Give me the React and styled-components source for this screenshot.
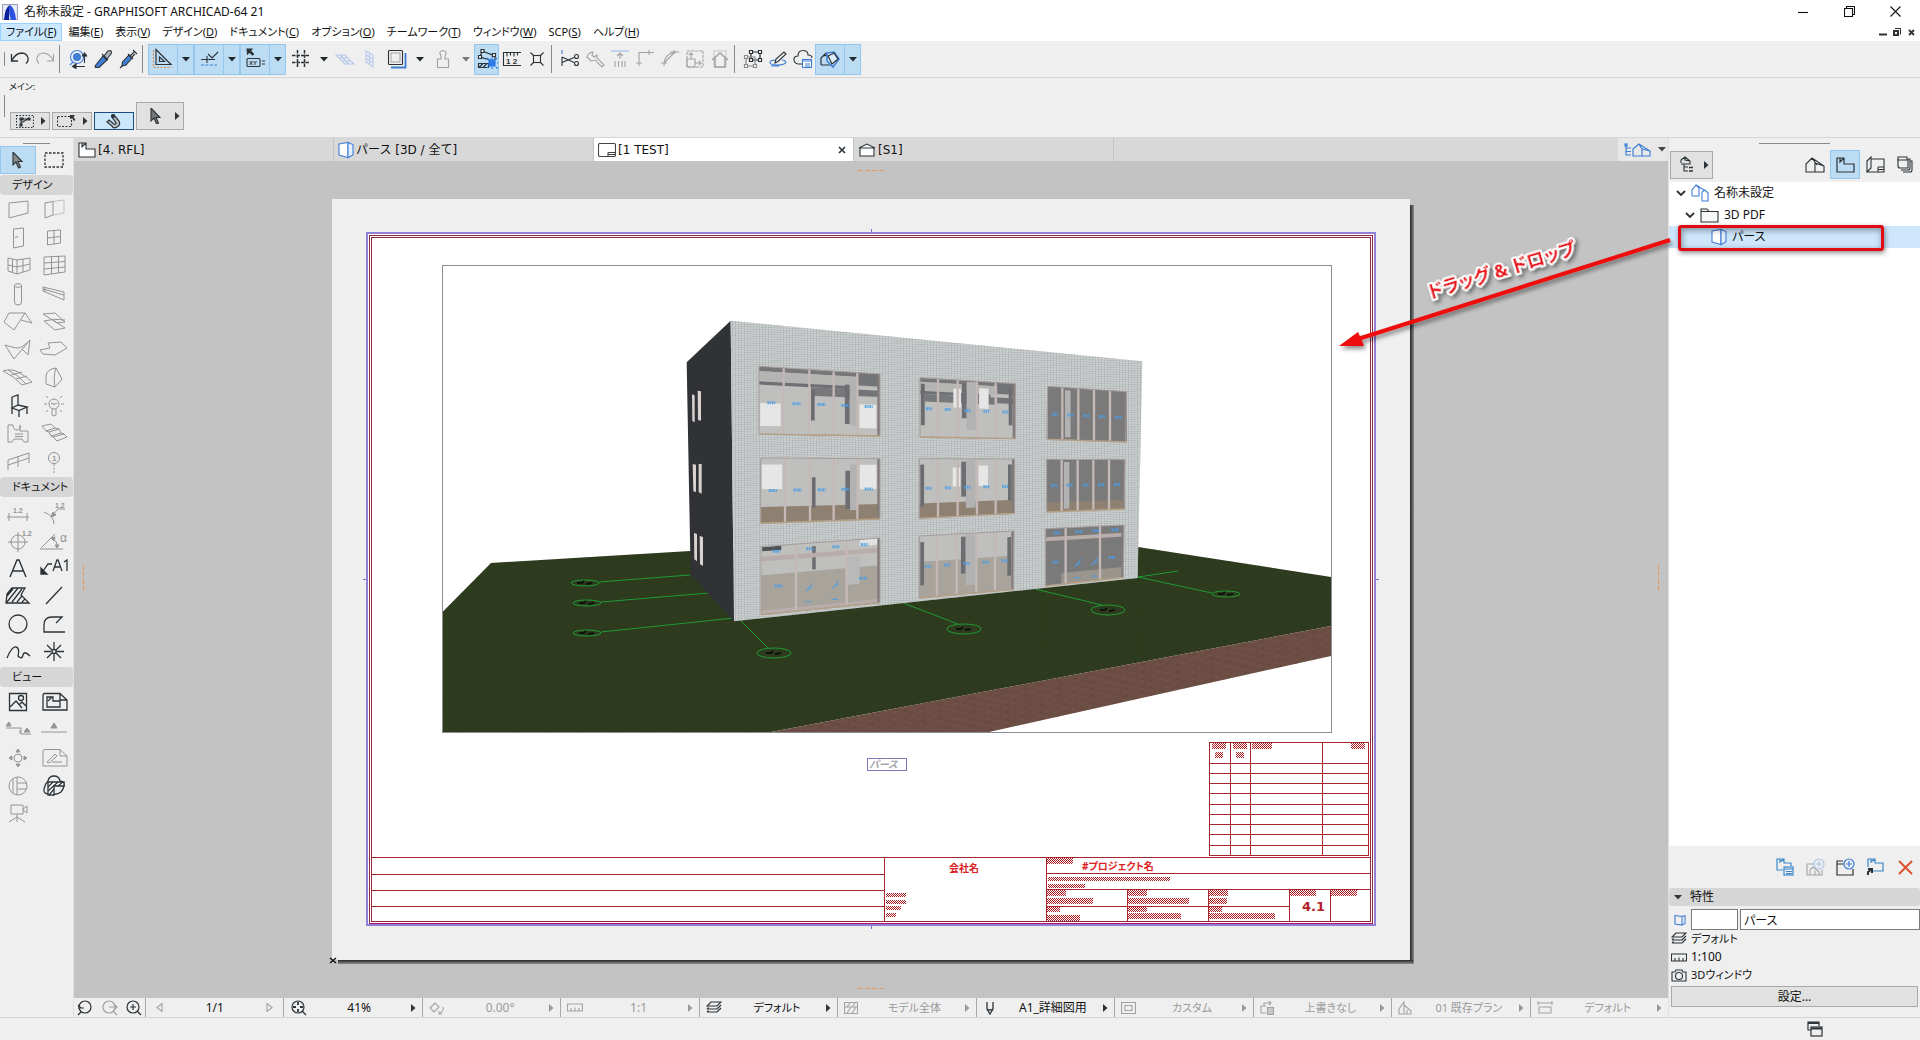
import React from "react";
import styled, { createGlobalStyle, css } from "styled-components";

const color = {
  chrome: "#efefef",
  line: "#d6d6d6",
  header: "#d6d6d6",
  canvas: "#c3c3c3",
  active: "#bcdcf4",
  activeLine: "#93c7ee",
  ink: "#2b3338",
  faint: "#a3a3a3",
  blue: "#3f7fd6",
  text: "#111",
};

const ui = '"Noto Sans", "Noto Sans CJK JP", sans-serif';
const wide = '"DejaVu Sans", "Noto Sans CJK JP", sans-serif';

const GlobalStyle = createGlobalStyle`
  *, *::before, *::after { box-sizing: border-box; }
  html, body, #root { height: 100%; margin: 0; }
  body {
    font: 12px/16px ${ui};
    font-feature-settings: "palt";
    color: ${color.text};
    background: ${color.chrome};
    overflow: hidden;
  }
  button, input { font: inherit; font-feature-settings: inherit; color: inherit; }
  button { margin: 0; padding: 0; border: 0; background: none; }
`;

const Shell = styled.div`
  min-height: 100vh;
  height: 100%;
  display: flex;
  flex-direction: column;
`;

/* ---------- title and menu ---------- */

const TitleBar = styled.header`
  flex: none;
  display: flex;
  align-items: center;
  height: 23px;
  padding: 0 2px;
  background: #fff;
`;
const Title = styled.h1`
  flex: 1;
  margin: 0 6px;
  font-size: 12px;
  font-weight: 400;
`;
const WinButton = styled.button`
  width: 46px;
  height: 20px;
  display: grid;
  place-items: center;
`;
const MenuBar = styled.nav`
  flex: none;
  display: flex;
  height: 18px;
  padding-right: 2px;
  background: #fff;
`;
const MenuItem = styled.button`
  padding: 0 5px;
  height: 18px;
  line-height: 16px;
  font-size: 11px;
  white-space: nowrap;
  border: 1px solid ${(p) => (p.$active ? "#99d1ff" : "transparent")};
  background: ${(p) => (p.$active ? "#cce8ff" : "transparent")};
`;
const DocControls = styled.div`
  margin-left: auto;
  display: flex;
`;
const DocButton = styled.button`
  width: 14px;
  display: grid;
  place-items: center;
`;

/* ---------- toolbar ---------- */

const Toolbar = styled.div`
  flex: none;
  display: flex;
  align-items: center;
  height: 37px;
  border-bottom: 1px solid ${color.line};
`;
const Grip = styled.span`
  width: 1px;
  height: ${(p) => p.$h}px;
  margin: 0 2px 0 4px;
  background: #8a8a8a;
`;
const Separator = styled.span`
  width: 8px;
  height: 28px;
  padding-left: 2px;
  &::before {
    content: "";
    display: block;
    width: 1px;
    height: 100%;
    background: #8a8a8a;
  }
`;
const ToolButton = styled.button`
  flex: none;
  display: grid;
  place-items: center;
  height: 31px;
  width: ${(p) => (p.$split ? 30 : 25)}px;
  ${(p) =>
    p.$active &&
    css`
      background: ${color.active};
      border: 1px solid ${color.activeLine};
    `}
`;
const DropButton = styled(ToolButton)`
  width: 16px;
  border-left: 0;
`;

const OptionsBar = styled.section`
  flex: none;
  height: 60px;
  border-bottom: 1px solid ${color.line};
`;
const OptionsLabel = styled.div`
  padding-left: 9px;
  height: 17px;
  font-size: 9px;
  line-height: 17px;
`;
const OptionsRow = styled.div`
  display: flex;
  gap: 2px;
  height: 35px;
  align-items: flex-end;
`;
const OptionsGrip = styled(Grip)`
  align-self: flex-start;
  margin-right: 3px;
`;
const OptionButton = styled.button`
  display: flex;
  align-items: center;
  justify-content: ${(p) => (p.$active ? "center" : "flex-end")};
  gap: ${(p) => (p.$large ? 14 : 7)}px;
  padding-right: ${(p) => (p.$active ? 0 : 3)}px;
  width: ${(p) => (p.$large ? 48 : 40)}px;
  height: ${(p) => (p.$large ? 28 : 18)}px;
  border: 1px solid ${(p) => (p.$active ? "#1c4f80" : "#a9a9a9")};
  background: ${(p) => (p.$active ? "#cce6fb" : "#e1e1e1")};
`;

/* ---------- main area ---------- */

const Workspace = styled.div`
  flex: 1;
  min-height: 0;
  display: flex;
  border-bottom: 1px solid ${color.line};
`;
const Toolbox = styled.aside`
  flex: none;
  width: 74px;
  border-right: 1px solid #e0e0e0;
`;
const Handle = styled.div`
  height: 7px;
  padding-top: 5px;
  &::before {
    content: "";
    display: block;
    height: 1px;
    width: ${(p) => p.$w}px;
    margin: 0 auto;
    background: #8a8a8a;
  }
`;
const ToolHeader = styled.h2`
  margin: 0;
  height: 20px;
  padding-left: 12px;
  line-height: 19px;
  font-size: 11px;
  font-weight: 400;
  background: ${color.header};
  border-radius: 4px;
`;
const ToolGrid = styled.div`
  display: grid;
  grid-template-columns: 36px 36px;
  grid-auto-rows: 28px;
  padding: 1px 0;
`;
const Tool = styled.button`
  display: grid;
  place-items: center;
  ${(p) =>
    p.$active &&
    css`
      background: ${color.active};
      box-shadow: inset 0 0 0 1px ${color.activeLine};
    `}
`;

const Center = styled.main`
  flex: 1;
  min-width: 0;
  display: flex;
  flex-direction: column;
`;
const Tabs = styled.div`
  flex: none;
  display: flex;
  height: 23px;
  background: #d8d8d8;
`;
const Tab = styled.div`
  flex: 0 1 260px;
  display: flex;
  align-items: center;
  padding: 0 3px 0 4px;
  border-right: 1px solid ${color.canvas};
  background: ${(p) => (p.$active ? "#fff" : "transparent")};
`;
const TabName = styled.button`
  flex: 1;
  display: flex;
  align-items: center;
  gap: 2px;
  text-align: left;
  font: 12px/16px ${wide};
`;
const TabClose = styled.button`
  width: 16px;
  height: 16px;
  display: grid;
  place-items: center;
`;
const ViewSwitch = styled.button`
  margin-left: auto;
  width: 50px;
  padding-left: 4px;
  display: flex;
  align-items: center;
  justify-content: center;
  gap: 7px;
  background: #e8e8e8;
`;
const Canvas = styled.div`
  flex: 1;
  min-height: 0;
  background: ${color.canvas};
`;
const Sheet = styled.svg`
  display: block;
  position: relative;
  z-index: 1;
  width: 100%;
  height: 100%;
  overflow: visible;
`;

/* ---------- status bar ---------- */

const StatusBar = styled.div`
  flex: none;
  display: flex;
  height: 19px;
`;
const StatusZoom = styled.div`
  flex: none;
  width: 71px;
  display: flex;
  justify-content: space-around;
  align-items: center;
`;
const StatusCell = styled.button`
  flex: 1 1 0;
  min-width: 0;
  display: flex;
  align-items: center;
  padding: 0 6px;
  border-left: 1px solid #a8a8a8;
  font-size: ${(p) => (p.$small ? 11 : 12)}px;
  color: ${(p) => (p.$off ? "#9a9a9a" : color.text)};
`;
const StatusText = styled.span`
  flex: 1;
  padding-left: ${(p) => (p.$inset ? 6 : 0)}px;
  white-space: nowrap;
`;

/* ---------- navigator ---------- */

const Navigator = styled.aside`
  flex: none;
  width: 252px;
  display: flex;
  flex-direction: column;
  border-left: 1px solid #e0e0e0;
`;
const NavTop = styled.div`
  display: flex;
  align-items: center;
  height: 37px;
  padding: 5px 0 3px 1px;
`;
const NavMenu = styled.button`
  display: flex;
  align-items: center;
  justify-content: flex-end;
  gap: 10px;
  width: 43px;
  height: 28px;
  padding-right: 3px;
  margin-right: auto;
  border: 1px solid #a9a9a9;
  background: #e1e1e1;
`;
const NavTab = styled.button`
  width: 30px;
  height: 29px;
  display: grid;
  place-items: center;
  ${(p) =>
    p.$active &&
    css`
      background: ${color.active};
      border: 1px solid ${color.activeLine};
    `}
`;
const Tree = styled.ul`
  flex: 1;
  margin: 0;
  padding: 0;
  list-style: none;
  background: #fff;
`;
const TreeRow = styled.li`
  position: relative;
  display: flex;
  align-items: center;
  gap: 5px;
  height: 22px;
  padding-left: ${(p) => p.$indent}px;
  background: ${(p) => (p.$selected ? "#cde6fb" : "transparent")};
`;
const Callout = styled.span`
  position: absolute;
  inset: -1px 36px -3px 9px;
  border: 3px solid #e30b13;
  border-radius: 3px;
  box-shadow: 1px 2px 5px rgba(0, 0, 0, 0.45), inset 1px 2px 6px rgba(0, 0, 0, 0.4);
`;
const NavActions = styled.div`
  display: flex;
  justify-content: flex-end;
  height: 42px;
`;
const NavAction = styled.button`
  width: 30px;
  display: grid;
  place-items: center;
`;
const PropHeader = styled.button`
  display: flex;
  align-items: center;
  gap: 8px;
  height: 18px;
  padding-left: 5px;
  background: ${color.header};
  border-radius: 3px;
`;
const PropFields = styled.div`
  display: flex;
  align-items: center;
  gap: 2px;
  padding: 3px 0 0 2px;
`;
const FieldIcon = styled.label`
  width: 18px;
  display: grid;
  place-items: center;
`;
const Field = styled.input`
  width: ${(p) => (p.$short ? "47px" : "auto")};
  flex: ${(p) => (p.$short ? "none" : "1")};
  min-width: 0;
  height: 21px;
  padding: 0 3px;
  border: 1px solid #7a7a7a;
  background: #fff;
`;
const PropRow = styled.div`
  display: flex;
  align-items: center;
  gap: 4px;
  height: 18px;
  padding-left: 2px;
  font-size: ${(p) => (p.$small ? 11 : 12)}px;
`;
const SettingsButton = styled.button`
  margin: 2px 2px 10px;
  height: 21px;
  border: 1px solid #a9a9a9;
  background: #e1e1e1;
`;
const Footer = styled.footer`
  flex: none;
  display: flex;
  justify-content: flex-end;
  height: 22px;
  padding: 3px 97px 0 0;
`;
const FooterButton = styled.button`
  width: 17px;
  height: 17px;
`;

/* ---------- icon helpers ---------- */

const Glyph = ({ w = 20, h = 20, c = color.ink, s = 1.1, f = "none", children }) => (
  <svg width={w} height={h} viewBox={`0 0 ${w} ${h}`} fill={f} stroke={c} strokeWidth={s} aria-hidden="true">
    {children}
  </svg>
);
const P = (props) => <path {...props} />;
const Down = ({ c = color.ink }) => (
  <Glyph w={8} h={5} f={c} c="none"><P d="M0 0h8l-4 4.5z" /></Glyph>
);
const Right = ({ c = color.ink }) => (
  <Glyph w={5} h={8} f={c} c="none"><P d="M0 0v8l4.5-4z" /></Glyph>
);
const Mini = ({ size = 6, ...rest }) => (
  <text fontFamily='"Liberation Sans", sans-serif' fontWeight="700" fontSize={size} stroke="none" {...rest} />
);
const cursor = "M1 0v13l3-3 2.5 6 2-1-2.5-5.5h4z";

const PerspectiveIcon = () => (
  <Glyph w={16} h={18} c={color.blue} f="#fff">
    <P d="M1 3L10 1.5V16.5L1 14z" /><P d="M10 1.5L15 3.5V14L10 16.5z" fill="#e3effc" />
  </Glyph>
);
const LayersIcon = () => (
  <Glyph w={16} h={14} s={1.2}>
    <P d="M5 1h10l-4 4H1z" /><P d="M1 8h10l4-4M1 11h10l4-4M1 8l1.5-1.5M1 11l1.5-1.5" />
  </Glyph>
);
const RulerIcon = ({ c }) => (
  <Glyph w={16} h={9} c={c}><P d="M.5 1h15v7H.5zM4 8V5M8 8V4.5M12 8V5" /></Glyph>
);

/* ---------- toolbar data ---------- */

const bar = {
  undo: <Glyph s={1.3}><P d="M1.5 5v7h6.5M1.5 12C4 7 8 4 12 4C18 4.5 20 11 16 14.5" /></Glyph>,
  redo: <Glyph c={color.faint}><P d="M18.500 5v7h-6.500M18.500 12C16 7 12 4 8 4C2 4.500 0 11 4 14.500" /></Glyph>,
  find: (
    <Glyph><g stroke={color.blue}><circle cx="9" cy="8" r="6.5" /><circle cx="9" cy="8" r="3.5" fill={color.blue} /><P d="M5 13l-3 3" /></g>
      <P d="M14 6h5M16.500 5v9M6 17.500h11" /><P d="M14.500 7l2-3 2 3zM8 15l-3.500 2.500 3.500 2z" fill={color.ink} /></Glyph>
  ),
  dropper: (
    <Glyph><P d="M10 7l4 4-8 7.500H2.500L2 17z" fill={color.blue} stroke={color.ink} /><P d="M9 5l6 6M11 7l4-5q2-1 3 0t0 3l-4 5" fill="#aab4bc" /></Glyph>
  ),
  syringe: (
    <Glyph><P d="M11 6l3 3-6 7-4 1 .5-4z" fill={color.blue} /><P d="M2 19l3-3M10 5l5 5M12 7l4-4M15 1l4 4M14 8l3-3" /></Glyph>
  ),
  guide: (
    <Glyph w={22} h={22} s={1.2}><P d="M4 1.500v15h15zM7.500 9v4.500h5z" /><P d="M1.500 2v17.500h18" stroke="#d98b4a" strokeDasharray="2 1.5" /></Glyph>
  ),
  snap: (
    <Glyph w={22} h={22}><P d="M3 11.500h14M9 8v7M10 6l4 4 6-6" /><P d="M3 17h16" stroke={color.blue} strokeDasharray="3 1.5" /></Glyph>
  ),
  coords: (
    <Glyph w={24} h={24}><P d="M4 2h5L7.500 4l3 3-1 1-3-3L4.500 7z" fill={color.ink} /><rect x="4" y="11.5" width="13" height="8" rx="1" />
      <Mini x="6" y="18" fill={color.ink}>XY</Mini><P d="M19 14h3M19 17h3" /></Glyph>
  ),
  grid: <Glyph s={1.5}><P d="M6.500 1v18M13.500 1v18M1 6.500h18M1 13.500h18" strokeDasharray="3.5 1" /></Glyph>,
  plane: <Glyph c="#b4c9ea"><P d="M1 6h9l9 9h-9zM4 9h9M7 12h9M5 6l9 9" /></Glyph>,
  plane2: <Glyph c="#b4c9ea"><P d="M6 2l7 4v12l-7-5zM9.500 4v11.500M6 6l7 4M6 9.500l7 4" /></Glyph>,
  trace: <Glyph><rect x="1.5" y="1.5" width="14" height="14" rx="1" /><rect x="4" y="4" width="9" height="9" stroke="#aaa" /><P d="M4 18.500h14.500V4" stroke={color.blue} strokeWidth="1.8" /></Glyph>,
  stamp: <Glyph c={color.faint}><P d="M8 7Q5 2 10 1.500Q15 2 12 7v3h3.500v8.500h-11V10H8z" /></Glyph>,
  suspend: (
    <Glyph w={22} h={22} s={1.2}><P d="M6 3l13 5v4M6 3L4 9l14 4" /><P d="M5 1.500h3v3H5zM2.500 7.500h3v3h-3zM16.500 5.500h3v3h-3z" fill="#fff" /><P d="M2.500 15.500h10v4h-10zM3 19.500l4-4M7 19.500l4-4" /><rect x="13" y="12" width="6" height="6" fill="#2b7be8" stroke="#2b7be8" /><P d="M11 10l1.500 1.500M21 10l-1.500 1.500M20 19l1.500 1.500M12 19l-1 1M21 15h1M16 9v2M16 19v2" stroke="#2b7be8" /></Glyph>
  ),
  measure: <Glyph><P d="M19 3.500H1.500v13H19M5 3.500v4M8.500 3.500v3M12 3.500v4M15.500 3.500v3" /><Mini x="4" y="15" size="8" fill={color.ink}>1 2</Mini></Glyph>,
  magic: <Glyph><rect x="6.5" y="6.500" width="7" height="7" /><P d="M3.500 3.500l3 3M16.500 3.500l-3 3M3.500 16.500l3-3M16.500 16.500l-3-3" /></Glyph>,
  cut: <Glyph><P d="M2 1v4" stroke={color.blue} /><P d="M2 8v9M2 8l12 5.500M2 13.500l12-5" /><circle cx="16.5" cy="7.500" r="2" /><circle cx="16.5" cy="14.5" r="2" /></Glyph>,
  wrench: <Glyph c={color.faint}><P d="M2 8q2-5 6-5l-1 3 2 2 3-2v3l7 7-2 2-7-7-4 1z" /></Glyph>,
  raise: <Glyph c={color.faint}><P d="M1 2h18" stroke="#9dbbe9" /><P d="M10 10V4M7 7l3-3 3 3M5 12v6M8.500 12v6M12 12v6M15 12v6" /></Glyph>,
  trim: <Glyph c={color.faint}><P d="M1 14h6M4 17V3.500h15M14 1v5" /></Glyph>,
  fillet: <Glyph c={color.faint}><P d="M1 14h6M4 17Q4 4 16 3.500M4 14L15 3M10 3h9M14 1v4" /></Glyph>,
  resize: <Glyph c={color.faint}><P d="M2 2h16v16H2z" strokeDasharray="3 1" /><P d="M2 10h8v8H2zM6 10V4M4 6l2-2 2 2M10 14h6M14 12l2 2-2 2" /></Glyph>,
  house: <Glyph c={color.faint}><P d="M4 2h12v16H4z" opacity=".5" /><P d="M2 11l8-7 8 7M5 9v9h10V9" strokeWidth="1.6" /></Glyph>,
  group: <Glyph s={1.2}><P d="M8 3h9v8H8z" /><P d="M3 8h9v9H3z" stroke="#888" /><P d="M6.500 1.500h3v3h-3zM15.500 1.500h3v3h-3zM6.500 9.500h3v3h-3zM15.500 9.500h3v3h-3z" fill="#fff" /><P d="M1.500 6.500h3v3h-3zM1.500 15.500h3v3h-3zM10.500 15.500h3v3h-3z" fill="#fff" stroke="#888" /></Glyph>,
  pen: <Glyph><P d="M8 11Q2 11 2 13.500T9 16q8 0 9-3-1-2-4-2M3 17h8" stroke={color.blue} /><P d="M7 14l1-4 8-7 2 2-8 7.500z" /></Glyph>,
  cloud: <Glyph><P d="M9 15H5Q1 14 1 10.500T5 7Q5 1.500 10 1.500T15 6q4 0 4 3" /><rect x="9.5" y="10.5" width="9" height="8" fill="#fff" stroke={color.blue} /><P d="M9 12h10M12 15h5M12 17h5" stroke={color.blue} /></Glyph>,
  cube: <Glyph w={22} h={22} s={1.2}><P d="M2 17V10L7 5M2 17h9M2 10q3-4 8-2" /><P d="M8 5l7-1 5 7-6 8-6-6z" stroke={color.blue} fill="#dcecfb" strokeWidth="1.6" /><P d="M9 8l6-3 4 6-6 5z" /></Glyph>,
};

const S = "separator";
const toolbarItems = [
  ["元に戻す", "undo"], ["やり直し", "redo"], S,
  ["検索と選択", "find"], ["パラメータを取得", "dropper"], ["パラメータを転送", "syringe"], S,
  ["ガイド線", "guide", "split", true], ["スナップガイド", "snap", "split", true], ["座標入力", "coords", "split", true],
  ["グリッド", "grid", "split"], ["編集平面", "plane"], ["平面表示", "plane2"], ["トレース", "trace", "split"],
  ["スタンプ", "stamp", "splitOff"], ["グループの一時解除", "suspend", "", true], ["測定", "measure"], ["マジックワンド", "magic"], S,
  ["分割", "cut"], ["調整", "wrench"], ["高さ調整", "raise"], ["交差", "trim"], ["フィレット", "fillet"], ["サイズ変更", "resize"], ["屋根", "house"], S,
  ["グループ", "group"], ["修正", "pen"], ["クラウド", "cloud"], ["3D表示", "cube", "split", true],
];

/* ---------- toolbox data ---------- */

const g = "#949494";
const T = ({ c = g, s = 1, children }) => <Glyph w={36} h={28} c={c} s={s}>{children}</Glyph>;

const designTools = [
  ["壁", <T><P d="M9 7L28 5V17L9 22z" /></T>],
  ["カーテン壁端", <T><P d="M17 5.500L28 4V17L17 19" opacity=".5" /><P d="M9 7L17 5.500V19L9 22z" /></T>],
  ["ドア", <T><P d="M13.500 5L23.500 4V22L13.500 24zM15 13.500l3-1" /></T>],
  ["窓", <T><P d="M11.500 7L24.500 6V19L11.500 21zM18 6.500V20M11.500 14L24.500 12.500" /></T>],
  ["コーナー窓", <T><P d="M8 6L17 8L30 6V18L17 22L8 19zM8 13L17 15L30 12M17 8V22M12.500 7V20.500M23 7V20" /></T>],
  ["カーテンウォール", <T><P d="M8 5L29 4V20L8 23zM15.500 5V22M22.500 4V21M8 11L29 9.500M8 17L29 15" /></T>],
  ["柱", <T><P d="M14.500 6V22Q14.500 25 18 25T21.500 22V6" /><ellipse cx="18" cy="5.5" rx="3.5" ry="1.800" /></T>],
  ["梁", <T><P d="M7 7L28 12V20L7 11zM7 9L28 15M9 7.500V12" /></T>],
  ["屋根", <T><P d="M9 5H25L14 22L4 14zM25 5L32 15L21 12" /></T>],
  ["シェル", <T><P d="M7 6L19 5L29 14L21 15zM8 13Q18 10 29 12M8 13L19 22L29 20L17 12" /></T>],
  ["モルフ曲面", <T><P d="M5 9L14 23L30 4L28 19L22 13M5 9Q14 12 18 12T30 4" /></T>],
  ["スラブ", <T><P d="M4 14L14 12L12 7L25 6L31 12L19 19L7 18z" /></T>],
  ["メッシュ", <T><P d="M3 7Q12 4 20 9T32 18L22 21Q14 12 3 7M8 6Q17 10 26 20M11 11L22 8M16 15L27 12" /></T>],
  ["モルフ", <T><P d="M10 12Q11 5 20 4L26 15L19 23L10 20zM20 4Q17 12 19 23" /></T>],
  ["オブジェクト", <T c={color.ink} s={1.3}><P d="M12 5L18 3V13M12 5V22M12 16L18 13L27 15L19 18.500zM19 18.500V25M27 15V22" /></T>],
  ["ランプ", <T><circle cx="18" cy="12" r="5" /><P d="M16 17v6q2 2 4 0v-6M15 12l2-1 1 2 2-2 1 1M8 12h3M25 12h3M10 4l2 2M26 4l-2 2M10 20l2-2M26 20l-2-2" /></T>],
  ["ゾーン", <T><P d="M8 5H13Q13 10 17 10T20 5V11H28V22H24L22 19H14L12 22H8zM15 14H23M15 16.500H23" /></T>],
  ["階段", <T><P d="M6 6L15 4L19 8L23 9L25 13L28 14L31 17L21 21L17 17L15 16L13 12L10 11z" /><P d="M10 11L19 8M15 16L25 13M13 12L23 9M17 17L28 14" /></T>],
  ["手摺り", <T><P d="M8 12L29 5V15M8 12V22M8 17L29 10M18 8.500V19" /></T>],
  ["通り芯", <T><circle cx="18" cy="10" r="5.5" /><Mini x="16" y="13" size="8" fill={g}>1</Mini><P d="M18 16V26" strokeDasharray="2 1.5" /></T>],
];
const documentTools = [
  ["寸法線", <T><P d="M7 19H29M9 15V23M27 15V23" /><Mini x="13" y="15" size="7" fill={g}>1.2</Mini></T>],
  ["半径寸法", <T><P d="M8 14Q18 18 18 26M16 18L22 11H29" /><P d="M15 19L20 17L17 14z" fill={g} /><Mini x="19" y="10" size="7" fill={g}>1.2</Mini></T>],
  ["レベル寸法", <T><circle cx="18" cy="16" r="7" /><P d="M8 16H28M18 6V26" /><Mini x="22" y="10" size="7" fill={g}>1.2</Mini></T>],
  ["角度寸法", <T><P d="M4 23H27M5 22L19 8M15 12Q22 14 21 22" /><P d="M15 12l4-1-1 4zM19 19l2 3 2-3z" fill={g} /><Mini x="24" y="16" size="12" fill={g} fontWeight="400">α</Mini></T>],
  ["テキスト", <T c={color.ink} s={1.4}><P d="M10 23L17 6H19L26 23M13 17H23" /></T>],
  ["ラベル", <T c={color.ink} s={1.3}><P d="M5 20L12 10H16" /><P d="M5 14V20H11z" fill={color.ink} /><P d="M17 17L21 6H22L26 17M18 13H25M28 8L31 6V17" /></T>],
  ["塗りつぶし", <T c={color.ink} s={1.3}><P d="M7 12L12 6H25L21 13L29 21H6zM7 20L18 6M12 20L22 7M17 20L22 14M7 14L13 7M22 20L25 17" /></T>],
  ["線分", <T c={color.ink} s={1.3}><P d="M10 22L26 5" /></T>],
  ["円弧/円", <T c={color.ink} s={1.3}><circle cx="18" cy="14" r="9" /></T>],
  ["ポリライン", <T c={color.ink} s={1.3}><P d="M20 13L26 7H16Q8 7 8 15V22H29" /></T>],
  ["スプライン", <T c={color.ink} s={1.3}><P d="M7 20Q12 8 16 9T18 18Q22 22 23 17T30 18" /></T>],
  ["ホットスポット", <T c={color.ink} s={1.3}><P d="M18 4V11M18 16V23M8 13.500H15M20 13.500H28M11 7L16 12M25 7L20 12M11 20L16 15M25 20L20 15" /><circle cx="18" cy="13.5" r="2" /></T>],
];
const viewTools = [
  ["図面", <T c={color.ink} s={1.3}><P d="M9.500 5.500H26.500V22.500H9.500zM10 19L16 13L22 20M19 17L22 14L26 18" /><circle cx="21" cy="10" r="2.5" /></T>],
  ["図面枠", <T c={color.ink} s={1.3}><P d="M8 5.500H24L31 12V22H7V7zM24 5.500V12H31M12 9H17V13H24V19H11V9zM12 13L16 9" /></T>],
  ["断面図", <T><P d="M6 12H21V18H31M20 18V14" /><P d="M6 10L9 6L11 10zM24 16L27 12L30 16z" fill={g} /></T>],
  ["立面図", <T><P d="M5 16H31" /><P d="M15 12L18 7L21 12z" fill={g} /></T>],
  ["展開図", <T><circle cx="18" cy="14" r="4" /><P d="M16 8L18 5L20 8zM16 20L18 23L20 20zM12 12L9 14L12 16zM24 12L27 14L24 16z" fill={g} /></T>],
  ["ワークシート", <T><P d="M8 5.500H24L31 12V22H7V7zM24 5.500V12H31M11 18L19 10L21 12L13 19zM16 18H26" /></T>],
  ["詳細図", <T><circle cx="18" cy="14" r="9" /><P d="M13 7V21M17 5V23M17 11H27M17 17H27" /></T>],
  ["変更", <T c={color.ink} s={1.3}><P d="M13 22Q7 22 8 17T12 9Q13 4 18 4T24 9Q29 10 28 14T25 20Q21 23 17 22z" /><P d="M12 10H28V14H18V23H12z" fill="#fff" /><P d="M12 15L17 10M12 19L22 10M13 23L18 17M22 14L27 10" /></T>],
  ["カメラ", <T><P d="M11 5H23V14H11zM23 9L27 6V13L23 10M17 14V18M9 22L17 17L25 22M17 17V22" /></T>],
];

/* ---------- building drawing ---------- */

const openings = [
  { q: [297, 199, 660, 222, 660, 408, 297, 402], m: [371, 448, 521, 592], tag: 0.53, kind: "ceiling" },
  { q: [780, 233, 1066, 251, 1066, 416, 780, 411], m: [834, 893, 951, 1007], tag: 0.52, kind: "ceiling" },
  { q: [1163, 259, 1400, 275, 1397, 426, 1160, 418], m: [1207, 1255, 1302, 1350], tag: 0.52, kind: "dark" },
  { q: [302, 474, 660, 476, 660, 657, 302, 670], m: [375, 450, 521, 592], tag: 0.5, kind: "floor" },
  { q: [778, 476, 1064, 477, 1064, 640, 778, 655], m: [834, 893, 951, 1007], tag: 0.5, kind: "floor" },
  { q: [1160, 478, 1395, 479, 1392, 627, 1160, 636], m: [1205, 1253, 1300, 1347], tag: 0.5, kind: "darkFloor" },
  { q: [303, 740, 660, 714, 660, 908, 303, 944], m: [408, 560], tag: 0.6, kind: "entry" },
  { q: [778, 708, 1062, 693, 1060, 868, 778, 894], m: [831, 890, 949, 1005], tag: 0.5, kind: "lobby" },
  { q: [1157, 686, 1392, 675, 1390, 832, 1157, 858], m: [1217, 1320], tag: 0.6, kind: "darkEntry" },
];

function Opening({ q, m, tag, kind }) {
  const [x0, t0, x1, t1, , b1, , b0] = q;
  const at = (x, k) => {
    const u = (x - x0) / (x1 - x0);
    const top = t0 + (t1 - t0) * u;
    const bottom = b0 + (b1 - b0) * u;
    return top + (bottom - top) * k;
  };
  const band = (xa, xb, ka, kb, fill) => (
    <polygon fill={fill} points={`${xa},${at(xa, ka)} ${xb},${at(xb, ka)} ${xb},${at(xb, kb)} ${xa},${at(xa, kb)}`} />
  );
  const w = x1 - x0;
  const dark = kind.startsWith("dark");
  const entry = kind === "entry" || kind === "darkEntry";
  const narrow = w < 300;
  const edges = [x0, ...m, x1];
  return (
    <g>
      {band(x0, x1, 0, 1, dark ? "#7b7a7a" : "#bfbfbd")}
      {kind === "ceiling" && (
        <>
          {band(x0, x1, 0, 0.07, "#77777a")}
          {band(x0, x1, 0.07, 0.22, "#b4b4b2")}
          {band(x0, x0 + w * 0.74, 0.22, 0.27, "#6f7073")}
          {band(x0 + w * (narrow ? 0.05 : 0.43), x0 + w * 0.8, 0.27, 0.4, "#77787a")}
          {band(x0 + w * 0.81, x1, 0.02, 0.2, "#737478")}
          {band(x0 + w * 0.81, x1, 0.27, 0.37, "#737478")}
        </>
      )}
      {(kind === "floor" || kind === "darkFloor") && band(x0, x1, kind === "floor" ? 0.75 : 0.82, 1, "#8f8171")}
      {(kind === "entry" || kind === "lobby") && band(x0, x1, 0.42, 1, "#a9a49b")}
      {kind === "darkEntry" && band(x0 + w * 0.2, x1, 0.8, 1, "#99948c")}
      {!dark && !narrow && kind !== "entry" && (
        <>
          {band(x0 + w * 0.43, x0 + w * 0.46, 0.3, 0.78, "#6b6c70")}
          {band(x0 + w * 0.71, x0 + w * 0.75, 0.2, 0.82, "#6d6e72")}
          {band(x0 + w * 0.75, x0 + w * 0.81, 0.1, 0.84, "#b2b2b2")}
        </>
      )}
      {!dark && narrow && (
        <>
          {band(x0 + w * 0.01, x0 + w * 0.05, 0.1, 0.8, "#6b6c70")}
          {kind !== "lobby" && band(x0 + w * 0.35, x0 + w * 0.43, 0.15, 0.48, "#e6e6e6")}
          {kind !== "lobby" && band(x0 + w * 0.62, x0 + w * 0.72, 0.12, 0.48, "#e6e6e6")}
          {band(x0 + w * 0.44, x0 + w * 0.49, 0.05, 0.66, "#6d6e72")}
          {band(x0 + w * 0.49, x0 + w * 0.59, 0.02, 0.86, "#b2b2b2")}
          {band(x0 + w * 0.93, x0 + w * 0.97, 0.1, 0.76, "#6d6e72")}
        </>
      )}
      {!narrow && (kind === "ceiling" || kind === "floor") && (
        <>
          {band(x0 + w * 0.01, x0 + w * 0.18, kind === "floor" ? 0.1 : 0.54, kind === "floor" ? 0.48 : 0.88, "#e6e6e6")}
          {band(x0 + w * 0.83, x0 + w * 0.97, kind === "floor" ? 0.1 : 0.5, kind === "floor" ? 0.5 : 0.88, "#e6e6e6")}
        </>
      )}
      {dark && kind !== "darkEntry" && band(x0 + w * 0.22, x0 + w * 0.29, 0.05, 0.95, "#b2b2b2")}
      {kind === "entry" && (
        <>
          {band(x0 + w * 0.71, x0 + w * 0.83, 0.25, 0.68, "#b9b9b9")}
          {band(x0 + w * 0.01, x0 + w * 0.17, 0.01, 0.07, "#4e5558")}
          {band(x0 + w * 0.83, x0 + w * 0.98, 0, 0.1, "#e2e2e2")}
          {band(x0 + w * 0.43, x0 + w * 0.46, 0.05, 0.4, "#6d6e72")}
        </>
      )}
      {entry && band(x0, x1, 0.15, 0.22, "#b9adab")}
      {kind === "entry" && band(x0, x1, 0.94, 1, "#b9adab")}
      {band(x1 - 8, x1, 0, 1, "#827b7b")}
      {m.map((x) => <line key={x} x1={x} x2={x} y1={at(x, 0)} y2={at(x, 1)} stroke="#c4b9b7" strokeWidth="7" />)}
      <polygon points={q.join(" ")} fill="none" stroke="#a59d9b" strokeWidth="3" />
      <line x1={x0} x2={x1} y1={b0} y2={b1} stroke="#b5a085" strokeWidth="4" />
      {edges.slice(0, -1).map((x, i) => {
        const cx = (x + edges[i + 1]) / 2;
        const half = narrow ? 9 : 12;
        if (entry && i === 1) return null;
        return (
          <line key={x} x1={cx - half} x2={cx + half} y1={at(cx, tag)} y2={at(cx, tag)} stroke="#4a9ee6" strokeWidth="9" strokeDasharray="6 2 4 2 5 2" opacity=".85" />
        );
      })}
      {entry &&
        [0.1, 0.38, 0.6, 0.84].map((u) => (
          <line key={u} x1={x0 + w * u} x2={x0 + w * u + 22} y1={at(x0 + w * u, 0.08)} y2={at(x0 + w * u, 0.08)} stroke="#4a9ee6" strokeWidth="9" strokeDasharray="6 2 4 2 5 2" opacity=".85" />
        ))}
      {entry &&
        [0.4, 0.62].map((u) => (
          <path key={u} d={`M${x0 + w * u - 8} ${at(x0 + w * u, 0.72)}l20-24m-16 20l16-10m-22 46h20`} stroke="#4a9ee6" strokeWidth="3" fill="none" />
        ))}
    </g>
  );
}

const axes = [
  { c: [585, 583], to: [690, 575] },
  { c: [587, 603], to: [709, 593] },
  { c: [587, 633], to: [734, 618] },
  { c: [774, 653], to: [741, 621], big: true },
  { c: [964, 629], to: [903, 603], big: true },
  { c: [1108, 610], to: [1035, 589], big: true },
  { c: [1226, 594], to: [1138, 577] },
];

function Building() {
  return (
    <g>
      <path d="M442.500 612L491 563L690 551L1138 547L1331 577V626L771 732H442.500z" fill="#2d3a1d" />
      <path d="M442.500 612L491 563L690 551L1138 547L1331 577V626L771 732H442.500z" fill="url(#grass)" />
      <path d="M771 732L1331 626V656L989 732z" fill="#6b4d43" />
      <path d="M771 732L1331 626V656L989 732z" fill="url(#soil)" />
      <g stroke="#1f9a35" fill="none">
        {axes.map(({ c, to, big }) => (
          <g key={c[0] + "-" + c[1]}>
            <line x1={to[0]} y1={to[1]} x2={c[0] + (big ? -6 : to[0] > c[0] ? 14 : -14)} y2={c[1] - (big ? 5 : 1)} />
            <ellipse cx={c[0]} cy={c[1]} rx={big ? 17 : 14} ry={big ? 5 : 3} />
            <path d={`M${c[0] - 8} ${c[1]}h5l2-2m2 3l6-1`} stroke="#0b130a" strokeWidth="2" />
          </g>
        ))}
        <path d="M1138 577L1178 571" />
      </g>
      <g transform="translate(660 300) scale(.33333)">
        <polygon points="80,187 212,62 222,964 92,825" fill="#303236" />
        <g fill="#d9d2cf">
          <path d="M96 283l8 3v81l-7-4zM113 272l10 2v88l-9-2zM98 492l10 2v82l-8-2zM116 491l9 2v88l-9-4zM102 699l9 3v82l-8-6zM119 708l10 3v86l-9-4z" />
        </g>
        <polygon points="212,62 1447,184 1433,834 222,964" fill="#cbcfcf" />
        <polygon points="212,62 1447,184 1433,834 222,964" fill="url(#brick)" />
        {openings.map((o) => <Opening key={o.q[0] + "-" + o.q[1]} {...o} />)}
      </g>
    </g>
  );
}

/* ---------- title block drawing ---------- */

const hatches = [
  [1212, 743, 14, 6], [1233, 743, 14, 6], [1252, 743, 20, 6], [1351, 743, 14, 6], [1215, 752, 8, 6], [1236, 752, 8, 6],
  [1047, 858, 26, 6], [1048, 877, 122, 4], [1048, 884, 37, 4],
  [1047, 890, 19, 6], [1047, 898, 46, 6], [1047, 907, 13, 5], [1047, 915, 33, 6],
  [1128, 890, 19, 6], [1128, 898, 61, 6], [1128, 907, 19, 5], [1128, 913, 53, 6],
  [1209, 890, 19, 6], [1209, 898, 18, 6], [1209, 907, 13, 5], [1209, 913, 66, 6],
  [1290, 890, 26, 6], [1331, 890, 26, 6],
  [886, 893, 20, 4], [886, 900, 20, 4], [886, 906, 15, 4], [886, 913, 10, 4],
];
const tableRows = [763, 773, 783, 793, 804, 814, 824, 834, 845];

function TitleBlock() {
  return (
    <g>
      <g stroke="#a3262c" fill="none" shapeRendering="crispEdges">
        <rect x="1209.5" y="742.5" width="159" height="113" />
        <path d="M1230.500 742V855M1250.500 742V855M1322.500 742V855" />
        {tableRows.map((y) => <path key={y} d={`M1209 ${y}.5H1368`} />)}
        <path d="M371 857.500H1371M371 874.500H884M371 890.500H884M371 906.500H884M884.500 857V922M1046.500 857V922" />
        <path d="M1047 873.500H1371M1047 889.500H1371M1047 906.500H1289M1127.500 889V922M1208.500 889V922M1289.500 889V922M1330.500 889V922" />
      </g>
      {hatches.map(([x, y, w, h]) => <rect key={x + "-" + y} x={x} y={y} width={w} height={h} fill="url(#hatch)" />)}
      <g fill="#dc1f26" fontFamily={ui} fontWeight="700">
        <text x="949" y="872" fontSize="10">会社名</text>
        <text x="1082" y="870" fontSize="10">#プロジェクト名</text>
        <text x="1302" y="911" fontSize="13" fontFamily='"DejaVu Sans", sans-serif' fill="#b3202a">4.1</text>
      </g>
    </g>
  );
}

function LayoutSheet() {
  return (
    <Sheet viewBox="74 161 1594 837" role="img" aria-label="レイアウト 1 TEST">
      <defs>
        <pattern id="brick" width="9" height="7" patternUnits="userSpaceOnUse" patternTransform="skewY(2)">
          <path d="M0 0V7M0 0H9" stroke="#a3a9ab" strokeWidth="2.5" />
        </pattern>
        <pattern id="grass" width="23" height="9" patternUnits="userSpaceOnUse" patternTransform="skewY(-8)">
          <path d="M0 1H12M9 5H21" stroke="#334222" opacity=".5" />
        </pattern>
        <pattern id="soil" width="17" height="7" patternUnits="userSpaceOnUse" patternTransform="skewY(-11)">
          <path d="M0 1H5M8 4H14" stroke="#7a594d" opacity=".5" /><path d="M3 5H6M11 2H13" stroke="#583c33" opacity=".6" />
        </pattern>
        <pattern id="hatch" width="2" height="2" patternUnits="userSpaceOnUse">
          <path d="M0 0H1V1H0zM1 1H2V2H1z" fill="#a81c22" />
        </pattern>
        <linearGradient id="edge"><stop offset="0" stopColor="#222625" /><stop offset="1" stopColor="#8b8d8c" /></linearGradient>
        <linearGradient id="foot" x2="0" y2="1"><stop offset="0" stopColor="#222625" /><stop offset="1" stopColor="#8b8d8c" /></linearGradient>
        <filter id="drop" x="-20%" y="-20%" width="140%" height="150%">
          <feDropShadow dx="2" dy="3" stdDeviation="2" floodOpacity=".45" />
        </filter>
      </defs>
      <rect x="1410" y="205" width="4" height="759" fill="url(#edge)" />
      <rect x="338" y="960" width="1075" height="4" fill="url(#foot)" />
      <rect x="332" y="199" width="1078" height="761" fill="#efefef" />
      <rect x="367" y="233" width="1008" height="692" fill="#fff" stroke="#9080d8" strokeWidth="2" />
      <g fill="none" stroke="#8e2a3a" shapeRendering="crispEdges">
        <rect x="369.5" y="235.5" width="1003" height="688" />
        <rect x="371.5" y="237.5" width="999" height="684" />
      </g>
      <path d="M369 923.500H1373" stroke="#b0106a" />
      <path d="M871.500 229V232M871.500 926V929M363 579.500H366M1376 579.500H1379" stroke="#7a6fd0" />
      <g stroke="#e59a61" strokeDasharray="5 2">
        <path d="M858 170.500H884M858 988.500H884M83.500 565V593M1658.500 565V593" />
      </g>
      <path d="M330 958l6 5m0-5l-6 5" stroke="#111" strokeWidth="1.5" />
      <Building />
      <rect x="442.5" y="265.5" width="889" height="467" fill="none" stroke="#8b8d95" shapeRendering="crispEdges" />
      <rect x="867.5" y="758.5" width="39" height="12" fill="#fff" stroke="#7f78bb" />
      <text x="869" y="768" fontFamily={ui} fontSize="10" fontStyle="italic" fontWeight="700" fill="#a7a8ad">パース</text>
      <TitleBlock />
      <g filter="url(#drop)">
        <path d="M1670 240L1358 339" stroke="#ee0a0a" strokeWidth="4" />
        <path d="M1339 346L1358 332L1364 346z" fill="#ee0a0a" />
      </g>
      <g filter="url(#drop)" transform="rotate(-17 1430 299)">
        <text x="1430" y="299" fontFamily={ui} fontSize="18" fontWeight="700" fill="#e8151c" stroke="#fff" strokeWidth="4" strokeLinejoin="round" paintOrder="stroke">
          ドラッグ &amp; ドロップ
        </text>
      </g>
    </Sheet>
  );
}

/* ---------- document tab and navigator icons ---------- */

const PlanIcon = () => (
  <Glyph w={18} h={16} f="#fff"><P d="M1 1H8V7H17V15H1zM4 1v4l4-4" /></Glyph>
);
const SheetIcon = () => (
  <Glyph w={18} h={14} c="#444"><rect x=".5" y=".5" width="17" height="13" rx="1.5" fill="#fff" /><P d="M10 9.500h7M10 9.500v4M10 11.500h7" /></Glyph>
);
const SectionIcon = () => (
  <Glyph w={18} h={14} f="#fff"><P d="M1 5L9 1L17 5M2 5H16V13H2z" /></Glyph>
);
const HousesIcon = () => (
  <Glyph w={20} h={16}><P d="M1 15V7L7 1L19 9V15zM7 1V3M10 15V6L19 9M7 1L12 8" /></Glyph>
);

const menus = [
  ["ファイル", "F"], ["編集", "E"], ["表示", "V"], ["デザイン", "D"], ["ドキュメント", "C"],
  ["オプション", "O"], ["チームワーク", "T"], ["ウィンドウ", "W"], ["SCP", "S"], ["ヘルプ", "H"],
];

const tabs = [
  { name: "[4. RFL]", icon: <PlanIcon /> },
  { name: "パース [3D / 全て]", icon: <PerspectiveIcon /> },
  { name: "[1 TEST]", icon: <SheetIcon />, active: true },
  { name: "[S1]", icon: <SectionIcon /> },
];

const f = color.faint;
const lens = (c, inner, tail = "M12 12l4 4") => (
  <Glyph w={17} h={17} c={c} s={1.2}><circle cx="8" cy="8" r="6" /><P d={tail} />{inner}</Glyph>
);
const status = [
  { text: "41%", icon: lens(color.ink, <P d="M8 3v3M8 10v3M3 8h3M10 8h3" strokeWidth="1.8" />) },
  { text: "0.00°", off: true, icon: <Glyph w={16} h={14} c={f}><P d="M1 7l5-5 4 4-5 5zM11 12q4-2 3-6M10 10v3h3" /></Glyph> },
  { text: "1:1", off: true, icon: <RulerIcon c={f} /> },
  { text: "デフォルト", small: true, icon: <LayersIcon /> },
  { text: "モデル全体", off: true, small: true, icon: <Glyph w={14} h={12} c={f}><P d="M.5.5h13v11H.5zM.5 5h13M3 5l3-4M8 5l3-4M3 11l4-6M8 11l4-6" /></Glyph> },
  { text: "A1_詳細図用", icon: <Glyph w={14} h={14} s={1.3}><P d="M4 1v7l3 5 3-5V1M4 8q3 2 6 0" /></Glyph> },
  { text: "カスタム", off: true, small: true, icon: <Glyph w={15} h={12} c={f}><P d="M.5.5h14v11H.5zM4 3.500h7v5H4z" /></Glyph> },
  { text: "上書きなし", off: true, small: true, icon: <Glyph w={15} h={14} c={f}><P d="M6 5H1v7h5M4 5V2h6M9 0l2 2-2 2" /><rect x="7.5" y="6.5" width="6" height="7" fill="#c8c8c8" /></Glyph> },
  { text: "01 既存プラン", off: true, small: true, icon: <Glyph w={15} h={14} c={f}><P d="M1 13V8l5-7v12zM6 4l7 6v3H6zM9 13V9" /></Glyph> },
  { text: "デフォルト", off: true, small: true, icon: <Glyph w={16} h={13} c={f}><P d="M1 2h14M1 0v4M15 0v4M2 6h12v6H2z" /></Glyph> },
];

const ToolSection = ({ title, tools }) => (
  <section>
    <ToolHeader>{title}</ToolHeader>
    <ToolGrid>
      {tools.map(([label, icon]) => <Tool key={label} aria-label={label}>{icon}</Tool>)}
    </ToolGrid>
  </section>
);

export default function App() {
  return (
    <Shell>
      <GlobalStyle />
      <TitleBar>
        <Glyph w={16} h={16} c="#9aa3b5"><rect x=".5" y=".5" width="15" height="15" fill="#e8ecf8" /><P d="M2 16Q3 3 8 1Q7 8 7 16z" fill="#0a1f9c" stroke="none" /><P d="M8 1Q13 4 14 16H9Q6 8 8 1z" fill="#2a51e0" stroke="none" /></Glyph>
        <Title>名称未設定 - GRAPHISOFT ARCHICAD-64 21</Title>
        <WinButton aria-label="最小化"><Glyph w={10} h={10} c="#111"><P d="M0 5.500h10" /></Glyph></WinButton>
        <WinButton aria-label="元に戻す(縮小)"><Glyph w={11} h={11} c="#111"><P d="M.5 2.500h8v8h-8zM2.500 2.500v-2h8v8h-2" /></Glyph></WinButton>
        <WinButton aria-label="閉じる"><Glyph w={11} h={11} c="#111"><P d="M.5 .5l10 10M10.500 .5l-10 10" /></Glyph></WinButton>
      </TitleBar>
      <MenuBar>
        {menus.map(([name, key], i) => (
          <MenuItem key={name} $active={i === 0}>{name}(<u>{key}</u>)</MenuItem>
        ))}
        <DocControls>
          <DocButton aria-label="文書を最小化"><Glyph w={8} h={8} s={2}><P d="M0 6.500h8" /></Glyph></DocButton>
          <DocButton aria-label="文書を縮小"><Glyph w={8} h={8}><P d="M1 3h4v4H1z" strokeWidth="2" /><P d="M2 .5h5.500v6" /></Glyph></DocButton>
          <DocButton aria-label="文書を閉じる"><Glyph w={7} h={7} s={1.8}><P d="M1 1l5 5M6 1l-5 5" /></Glyph></DocButton>
        </DocControls>
      </MenuBar>

      <Toolbar role="toolbar" aria-label="標準">
        <Grip $h={14} />
        {toolbarItems.map((item, i) => {
          if (item === S) return <Separator key={i} />;
          const [label, icon, split, active] = item;
          return (
            <React.Fragment key={label}>
              <ToolButton aria-label={label} $split={!!split} $active={active}>{bar[icon]}</ToolButton>
              {split && (
                <DropButton aria-label={`${label}のオプション`} $active={active}>
                  <Down c={split === "splitOff" ? "#777" : "#20282c"} />
                </DropButton>
              )}
            </React.Fragment>
          );
        })}
      </Toolbar>

      <OptionsBar>
        <OptionsLabel>メイン:</OptionsLabel>
        <OptionsRow>
          <OptionsGrip $h={22} />
          <OptionButton aria-label="選択方法">
            <Glyph w={18} h={13}><rect x=".5" y=".5" width="17" height="12" strokeDasharray="1.5 1.5" /><P d="M5 10V4h8M5 8l7-4" /><P d="M4 3h3v2H4zM12 3h2v2h-2zM4 9h2v2H4z" fill={color.ink} /></Glyph>
            <Right />
          </OptionButton>
          <OptionButton aria-label="矢印範囲">
            <Glyph w={19} h={12}><rect x=".5" y="1.5" width="14" height="10" strokeDasharray="2 1.5" /><P d="M13 0h5l-1.500 2 2 3-1.500 1-2-3-2 1z" fill={color.ink} stroke="none" /></Glyph>
            <Right />
          </OptionButton>
          <OptionButton $active aria-label="クイック選択">
            <Glyph w={16} h={16} s={1.2}><P d="M8 2l5 6q2 4-2 6t-5-1L1 9l2-2 5 4q2 1 2-1L6 4z" fill="#b9c0c4" /><circle cx="7" cy="3" r="1.5" fill={color.ink} /></Glyph>
          </OptionButton>
          <OptionButton $large aria-label="矢印ツール">
            <Glyph w={11} h={16} f="#777"><P d={cursor} /></Glyph>
            <Right />
          </OptionButton>
        </OptionsRow>
      </OptionsBar>

      <Workspace>
        <Toolbox aria-label="ツールボックス">
          <Handle $w={27} />
          <ToolGrid>
            <Tool $active aria-label="矢印"><Glyph w={12} h={17} f="#8a8a8a"><P d={cursor} /></Glyph></Tool>
            <Tool aria-label="矩形選択"><Glyph w={20} h={16} s={1.3}><rect x="1" y="1" width="18" height="14" strokeDasharray="2.5 1.5" /></Glyph></Tool>
          </ToolGrid>
          <ToolSection title="デザイン" tools={designTools} />
          <ToolSection title="ドキュメント" tools={documentTools} />
          <ToolSection title="ビュー" tools={viewTools} />
        </Toolbox>

        <Center>
          <Tabs>
            {tabs.map((t) => (
              <Tab key={t.name} $active={t.active}>
                <TabName>{t.icon}{t.name}</TabName>
                {t.active && <TabClose aria-label="タブを閉じる"><Glyph w={8} h={8} s={1.6}><P d="M1 1l6 6M7 1l-6 6" /></Glyph></TabClose>}
              </Tab>
            ))}
            <ViewSwitch aria-label="ナビゲータ表示">
              <Glyph w={27} h={16} c={color.blue} s={1.2}><P d="M2 3v10h5M2 6h5M2 9.500h5M9 14V7l6-5 11 7v5zM18 14V6M15 2l3 5 8 2" /><rect x="1" y="2" width="2" height="2" /></Glyph>
              <Down c="#444" />
            </ViewSwitch>
          </Tabs>
          <Canvas><LayoutSheet /></Canvas>
          <StatusBar>
            <StatusZoom>
              {lens(color.ink, <P d="M1 6l3 3M1 9h6" />, "M4 13l-3 3")}
              {lens(f, <P d="M8 8h8M13 5l3 3-3 3" />)}
              {lens(color.ink, <P d="M5 8h6M8 5v6" />)}
            </StatusZoom>
            <StatusCell>
              <Glyph w={14} h={9} c={f}><P d="M10 .5v8l-5-4z" /></Glyph>
              <StatusText>1/1</StatusText>
              <Glyph w={14} h={9} c={f}><P d="M4 .5v8l5-4z" /></Glyph>
            </StatusCell>
            {status.map((s, i) => (
              <StatusCell key={i} $off={s.off} $small={s.small}>
                {s.icon}<StatusText $inset={i > 0}>{s.text}</StatusText><Right c={s.off ? "#999" : color.ink} />
              </StatusCell>
            ))}
          </StatusBar>
        </Center>

        <Navigator aria-label="ナビゲータ">
          <Handle $w={71} />
          <NavTop>
            <NavMenu aria-label="プロジェクト選択">
              <Glyph w={14} h={17}><P d="M1 7V4l4-3 5 4v3H1M5 1v3l5 1M4 8v7h4M4 11h4" /><P d="M9 11.500h4M9 15h4" strokeWidth="1.6" /></Glyph>
              <Right />
            </NavMenu>
            <NavTab aria-label="プロジェクト一覧"><HousesIcon /></NavTab>
            <NavTab $active aria-label="ビュー一覧"><Glyph w={19} h={16} s={1.2}><P d="M1 1H8V7H18V15H1zM4 1v4l4-4" /></Glyph></NavTab>
            <NavTab aria-label="レイアウトブック"><Glyph w={19} h={17}><P d="M1 5L5 1v11L1 16zM5 3h13v13H1M12 11h6M12 11v5M12 13.500h6" /></Glyph></NavTab>
            <NavTab aria-label="発行セット"><Glyph w={18} h={17}><P d="M1 4h11v8H4q-2 0-2-2V1h9v3M12 3h2v9q0 2-2 2H5M14 5h2v9q0 2-2 2H7" /></Glyph></NavTab>
          </NavTop>
          <Tree>
            <TreeRow $indent={7}>
              <Glyph w={10} h={8} s={1.8}><P d="M1 2l4 4 4-4" /></Glyph>
              <Glyph w={18} h={18} c={color.blue}><P d="M1 12V6l4-5 8 5M1 12h7V4M11 17V8l3-2 3 3v8zM5 1l3 3" /></Glyph>
              名称未設定
            </TreeRow>
            <TreeRow $indent={16}>
              <Glyph w={10} h={8} s={1.8}><P d="M1 2l4 4 4-4" /></Glyph>
              <Glyph w={19} h={15} f="#f7f7f7"><P d="M1 14V1h6l2 2.500h9V14zM1 3.500h8" /></Glyph>
              3D PDF
            </TreeRow>
            <TreeRow $indent={42} $selected>
              <PerspectiveIcon />
              パース
              <Callout />
            </TreeRow>
          </Tree>
          <NavActions>
            <NavAction aria-label="ビュー設定"><Glyph w={18} h={18} c="#3b86c8" s={1.2}><P d="M7 12H1V1h7v4h7v3M4 1v3l4-3" /><rect x="8" y="9" width="9" height="8" /><P d="M8 11h9M10 13.500h6M10 15.500h6" /></Glyph></NavAction>
            <NavAction aria-label="ビュー保存"><Glyph w={19} h={18} c={f}><P d="M8 6H1v11h15v-5M4 17v-5l3-3 6 5v3zM9 17v-4" /><circle cx="13" cy="6" r="5" stroke="#a8c4e4" fill={color.chrome} /><P d="M10 6h6M13 3v6" stroke="#a8c4e4" /></Glyph></NavAction>
            <NavAction aria-label="新規フォルダ"><Glyph w={19} h={18} s={1.2}><P d="M8 6H1V17h16v-6M1 6V3h6" /><circle cx="13" cy="6" r="5" stroke={color.blue} fill={color.chrome} /><P d="M10 6h6M13 3v6" stroke={color.blue} /></Glyph></NavAction>
            <NavAction aria-label="ショートカット"><Glyph w={18} h={18} c="#3b86c8" s={1.2}><P d="M2 9V1h7v4h8v8H7M5 1v3l4-3" /><P d="M2 11h4v4M6 11l-4 3v3" stroke={color.ink} strokeWidth="2" /></Glyph></NavAction>
            <NavAction aria-label="削除"><Glyph w={15} h={15} c="#e0512f" s={2}><P d="M1 1l13 13M14 1L1 14" /></Glyph></NavAction>
          </NavActions>
          <PropHeader><Down c="#333" />特性</PropHeader>
          <PropFields>
            <FieldIcon htmlFor="view-id" aria-label="ビューID"><Glyph w={12} h={12} c={color.blue}><P d="M1 1.500L8 2.500V11L1 10zM8 2.500L11 1.500V9.500L8 11" /></Glyph></FieldIcon>
            <Field id="view-id" $short defaultValue="" />
            <Field aria-label="ビュー名" defaultValue="パース" />
          </PropFields>
          <PropRow $small><LayersIcon />デフォルト</PropRow>
          <PropRow><RulerIcon />1:100</PropRow>
          <PropRow $small><Glyph w={16} h={13}><P d="M1 3h3l1-2h6l1 2h3v9H1z" /><circle cx="8" cy="7" r="3.5" /></Glyph>3Dウィンドウ</PropRow>
          <SettingsButton>設定...</SettingsButton>
        </Navigator>
      </Workspace>
      <Footer>
        <FooterButton aria-label="ウィンドウ一覧"><Glyph w={16} h={16} s={1.2}><P d="M4 9H1V1h11v4" /><rect x="4" y="6" width="11" height="9" /><P d="M1 2h11M4 7.500h11" strokeWidth="1.8" /></Glyph></FooterButton>
      </Footer>
    </Shell>
  );
}
